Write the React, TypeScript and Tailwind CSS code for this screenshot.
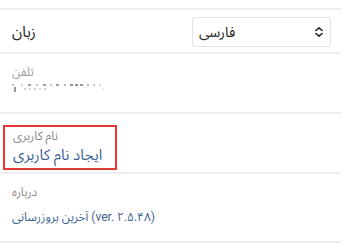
import React from 'react'

const dots = [
  { x: 0, w: 2, c: '#bdbdbd' }, { x: 9, w: 2, c: '#d0d0d0' }, { x: 16, w: 3, c: '#9e9e9e' },
  { x: 24, w: 2, c: '#c8c8c8' }, { x: 31, w: 3, c: '#a0a0a0' }, { x: 38, w: 2, c: '#cfcfcf' },
  { x: 44, w: 3, c: '#9a9a9a' }, { x: 52, w: 2, c: '#bbbbbb' }, { x: 58, w: 3, c: '#8f8f8f' },
  { x: 63, w: 3, c: '#8f8f8f' }, { x: 68, w: 3, c: '#999999' }, { x: 75, w: 2, c: '#bcbcbc' },
  { x: 81, w: 2, c: '#c4c4c4' }, { x: 87, w: 2, c: '#d8d8d8' },
]

const dots2 = [
  { x: 12, w: 2, c: '#cfcfcf' }, { x: 17, w: 2, c: '#d4d4d4' }, { x: 22, w: 2, c: '#c8c8c8' },
  { x: 27, w: 2, c: '#d0d0d0' }, { x: 32, w: 2, c: '#cccccc' },
]

function MaskedPhone() {
  return (
    <div className="relative h-[10px] w-[95px] mt-[3px]">
      {dots.map((d, i) => (
        <span key={i} className="absolute top-[1px] h-[2px]" style={{ left: d.x, width: d.w, background: d.c }} />
      ))}
      {dots2.map((d, i) => (
        <span key={i} className="absolute top-[5px] h-[2px]" style={{ left: d.x, width: d.w, background: d.c }} />
      ))}
      <span className="absolute left-[2px] top-[4px] h-[5px] w-[2px] bg-[#9a9a9a]" />
      <span className="absolute left-[91px] top-[5px] h-[2px] w-[1px] bg-[#dddddd]" />
    </div>
  )
}

function UpDown() {
  return (
    <svg width="10" height="12" viewBox="0 0 10 12" fill="none" stroke="#222" strokeWidth="1.6" strokeLinecap="round" strokeLinejoin="round">
      <path d="M2 4.5 L5 1.8 L8 4.5" />
      <path d="M2 7.5 L5 10.2 L8 7.5" />
    </svg>
  )
}

export default function App() {
  return (
    <div
      className="w-[341px] h-[244px] bg-white overflow-hidden pt-[8px]"
      style={{ fontFamily: 'Roboto, "Noto Sans Arabic", Vazirmatn, "DejaVu Sans", sans-serif' }}
    >
      {/* language */}
      <div className="border-y-2 border-[#eeeeee] h-[46px] flex items-center justify-between pl-[12px] pr-[10px] pt-[2px]">
        <span className="text-[15px] text-[#222]">زبان</span>
        <div className="w-[139px] h-[30px] border border-[#e3e3e3] rounded-[2px] flex items-center justify-between pl-[6px] pr-[6px]">
          <span className="text-[14px] text-[#222]">فارسی</span>
          <UpDown />
        </div>
      </div>

      {/* phone */}
      <div className="border-b-2 border-[#eeeeee] h-[60px] pl-[12px] pt-[11px]">
        <div className="text-[12px] leading-[15px] text-[#a0a0a0]">تلفن</div>
        <MaskedPhone />
      </div>

      {/* username */}
      <div className="border-b-2 border-[#eeeeee] h-[60px] pl-[3px] pt-[11px]">
        <div className="w-[114px] h-[45px] border-2 border-[#e53935] pl-[8px] pt-[2px]">
          <div className="text-[12px] leading-[15px] text-[#8a8a8a]">نام کاربری</div>
          <div className="text-[15px] leading-[22px] text-[#3d6393]">ایجاد نام کاربری</div>
        </div>
      </div>

      {/* about */}
      <div className="border-b-2 border-[#eeeeee] h-[69px] pl-[12px] pt-[11px]">
        <div className="text-[12px] leading-[15px] text-[#8a8a8a]">درباره</div>
        <div className="text-[12px] leading-[16px] text-[#3d6393] mt-[9px]">آخرین بروزرسانی (ver. ۲.۵.۴۸)</div>
      </div>
    </div>
  )
}
